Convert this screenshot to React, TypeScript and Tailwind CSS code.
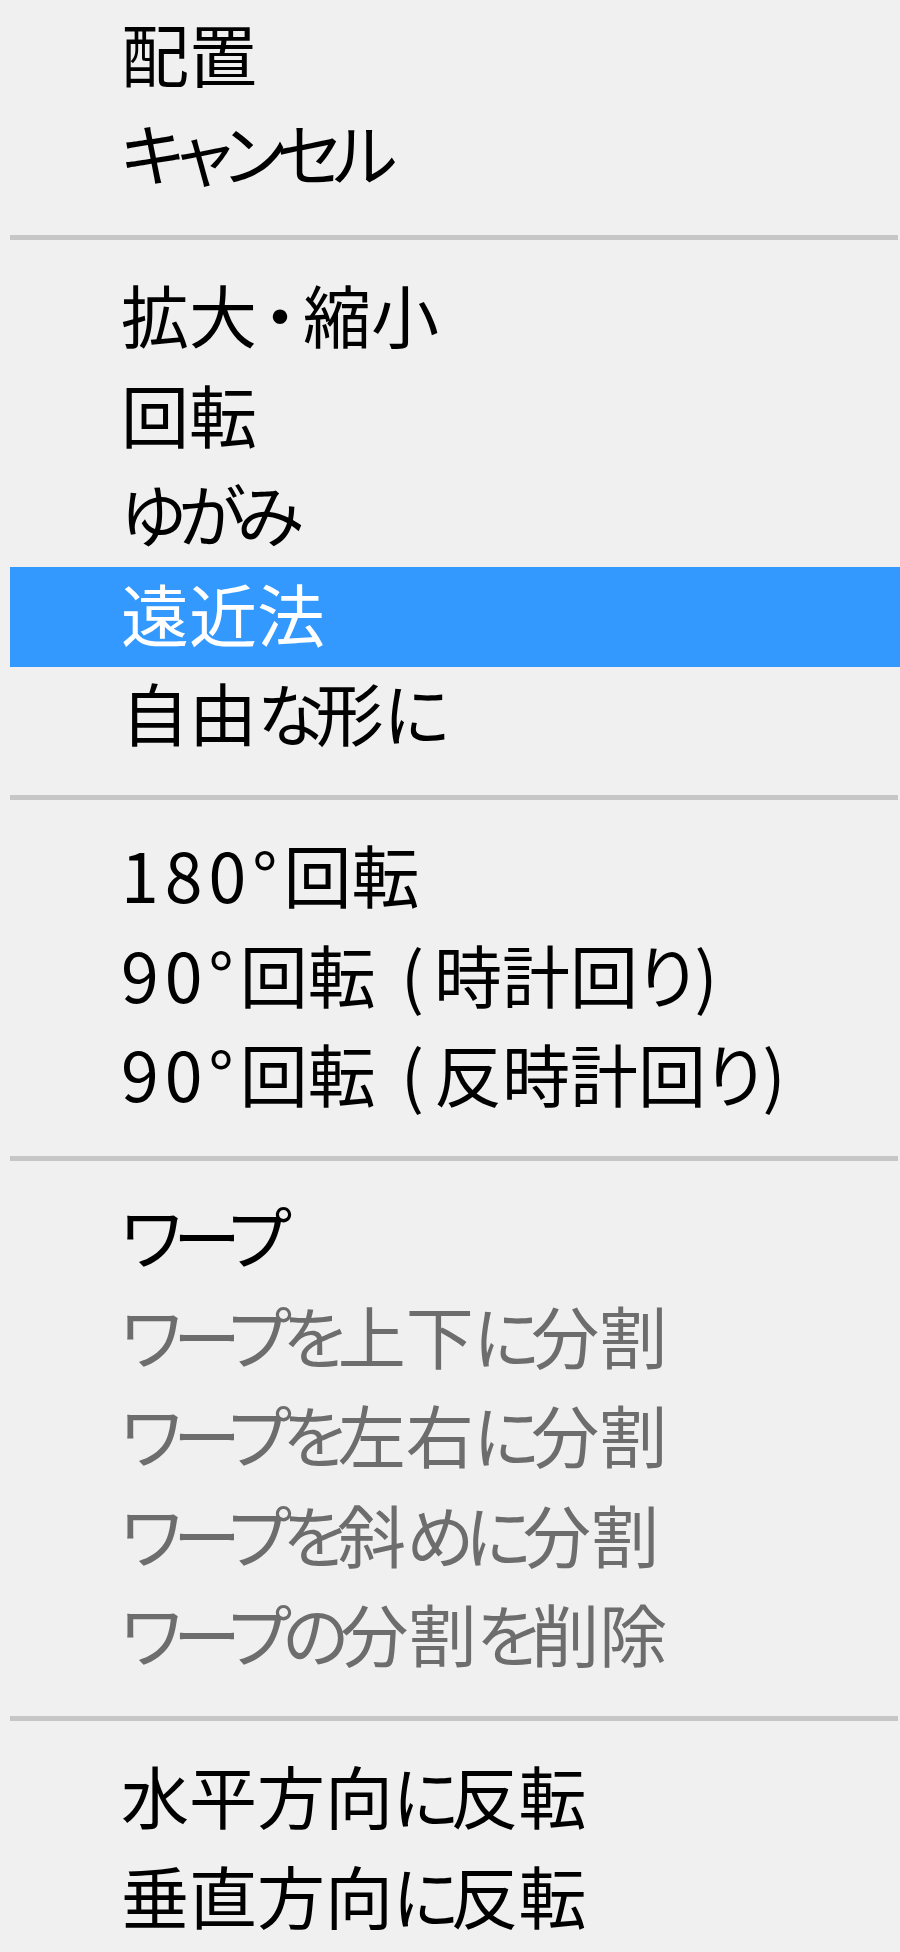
type Item = { label: string; disabled?: boolean; active?: boolean };

const groups: Item[][] = [
  [{ label: "配置" }, { label: "キャンセル" }],
  [
    { label: "拡大・縮小" },
    { label: "回転" },
    { label: "ゆがみ" },
    { label: "遠近法", active: true },
    { label: "自由な形に" },
  ],
  [{ label: "180°回転" }, { label: "90°回転 (時計回り)" }, { label: "90°回転 (反時計回り)" }],
  [
    { label: "ワープ" },
    { label: "ワープを上下に分割", disabled: true },
    { label: "ワープを左右に分割", disabled: true },
    { label: "ワープを斜めに分割", disabled: true },
    { label: "ワープの分割を削除", disabled: true },
  ],
  [{ label: "水平方向に反転" }, { label: "垂直方向に反転" }],
];

// the original is a narrow bitmap UI font: kana run tight, digits and brackets run wide
function charClass(ch: string) {
  if (/[ぁ-ゖァ-ヺー]/.test(ch)) return "tracking-[-8px]";
  if (/[0-9°]/.test(ch)) return "tracking-[6px]";
  if (ch === " " || ch === "(") return "tracking-[10px]";
  if (ch === ")") return "ml-[8px]";
  if (ch === "・") return "px-[6px]";
  return "";
}

function Label({ text }: { text: string }) {
  const runs: { cls: string; text: string }[] = [];
  for (const ch of Array.from(text)) {
    const cls = charClass(ch);
    const last = runs[runs.length - 1];
    if (last && last.cls === cls && cls !== "ml-[8px]" && cls !== "px-[6px]") last.text += ch;
    else runs.push({ cls, text: ch });
  }
  return (
    <span className="leading-none pb-[8px] whitespace-pre">
      {runs.map((r, i) => (
        <span key={i} className={r.cls}>
          {r.text}
        </span>
      ))}
    </span>
  );
}

function MenuRow({ label, disabled, active }: Item) {
  return (
    <div
      className={`h-[99.5px] flex items-center ml-[10px] pl-[111px] whitespace-nowrap ${
        active ? "bg-[#3399ff] text-white" : disabled ? "text-[#6d6d6d]" : "text-black"
      }`}
    >
      <Label text={label} />
    </div>
  );
}

function Separator() {
  return (
    <div className="h-[62.5px] flex items-center pl-[10px] pr-[2px]">
      <div className="h-[5px] w-full bg-[#c6c6c6]" />
    </div>
  );
}

export default function App() {
  return (
    <div
      className="w-[900px] h-[1952px] bg-[#f0f0f0] pt-[7px] overflow-hidden text-[68px] [font-feature-settings:'palt']"
      style={{ fontFamily: '"Noto Sans CJK JP", "Noto Sans", sans-serif' }}
    >
      {groups.map((group, gi) => (
        <div key={gi}>
          {gi > 0 && <Separator />}
          {group.map((item) => (
            <MenuRow key={item.label} {...item} />
          ))}
        </div>
      ))}
    </div>
  );
}
